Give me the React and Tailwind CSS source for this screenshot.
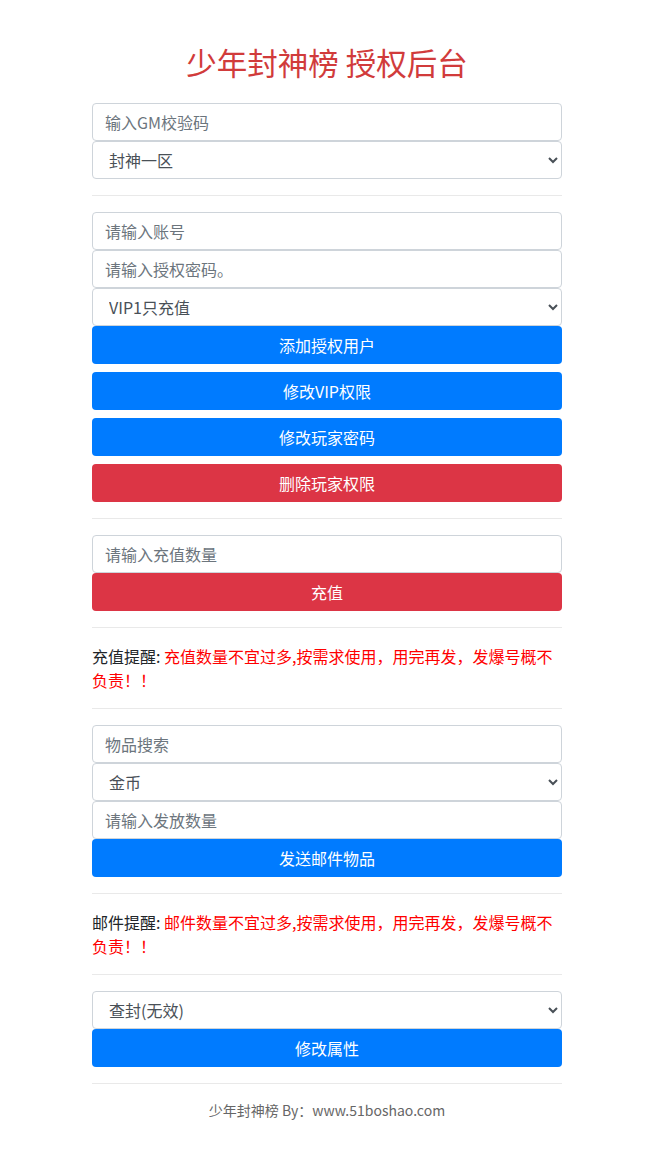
import React from 'react';

const font = { fontFamily: '"Noto Sans CJK SC", "Noto Sans", sans-serif' };

const Input = ({ placeholder }) => (
    <input
        type="text"
        placeholder={placeholder}
        className="block w-full h-[38px] px-3 text-base text-[#495057] bg-white border border-[#ced4da] rounded placeholder:text-[#6c757d] outline-none"
    />
);

const Select = ({ options }) => (
    <select className="block w-full h-[38px] pl-3 pr-2 text-base text-[#495057] bg-white border border-[#ced4da] rounded outline-none">
        {options.map((o) => (
            <option key={o}>{o}</option>
        ))}
    </select>
);

const Btn = ({ children, red, className = '' }) => (
    <button
        className={`block w-full h-[38px] text-base text-white rounded ${red ? 'bg-[#dc3545]' : 'bg-[#007bff]'} ${className}`}
    >
        {children}
    </button>
);

const Hr = () => <hr className="my-4 border-0 border-t border-[#e9e9e9]" />;

const App = () => {
    return (
        <div className="min-h-[1163px] bg-white pt-[44px]" style={font}>
            <div className="ml-[92px] w-[470px]">
                <h1 className="text-[30.5px] leading-[36px] text-center text-[#d13b3b] mb-[23px]">
                    少年封神榜 授权后台
                </h1>

                {/* ─── GM / zone ─── */}
                <Input placeholder="输入GM校验码" />
                <Select options={['封神一区']} />
                <Hr />

                {/* ─── Account ─── */}
                <Input placeholder="请输入账号" />
                <Input placeholder="请输入授权密码。" />
                <Select options={['VIP1只充值']} />
                <Btn>添加授权用户</Btn>
                <Btn className="mt-2">修改VIP权限</Btn>
                <Btn className="mt-2">修改玩家密码</Btn>
                <Btn red className="mt-2">删除玩家权限</Btn>
                <Hr />

                {/* ─── Recharge ─── */}
                <Input placeholder="请输入充值数量" />
                <Btn red>充值</Btn>
                <Hr />
                <p className="text-base leading-6 text-[#212529]">
                    充值提醒: <span className="text-[#ff0000]">充值数量不宜过多,按需求使用，用完再发，发爆号概不负责！！</span>
                </p>
                <Hr />

                {/* ─── Mail ─── */}
                <Input placeholder="物品搜索" />
                <Select options={['金币']} />
                <Input placeholder="请输入发放数量" />
                <Btn>发送邮件物品</Btn>
                <Hr />
                <p className="text-base leading-6 text-[#212529]">
                    邮件提醒: <span className="text-[#ff0000]">邮件数量不宜过多,按需求使用，用完再发，发爆号概不负责！！</span>
                </p>
                <Hr />

                {/* ─── Ban ─── */}
                <Select options={['查封(无效)']} />
                <Btn>修改属性</Btn>
                <Hr />

                <p className="text-sm leading-5 text-center text-[#666] mt-[7px]">
                    少年封神榜 By：www.51boshao.com
                </p>
            </div>
        </div>
    );
};

export default App;
